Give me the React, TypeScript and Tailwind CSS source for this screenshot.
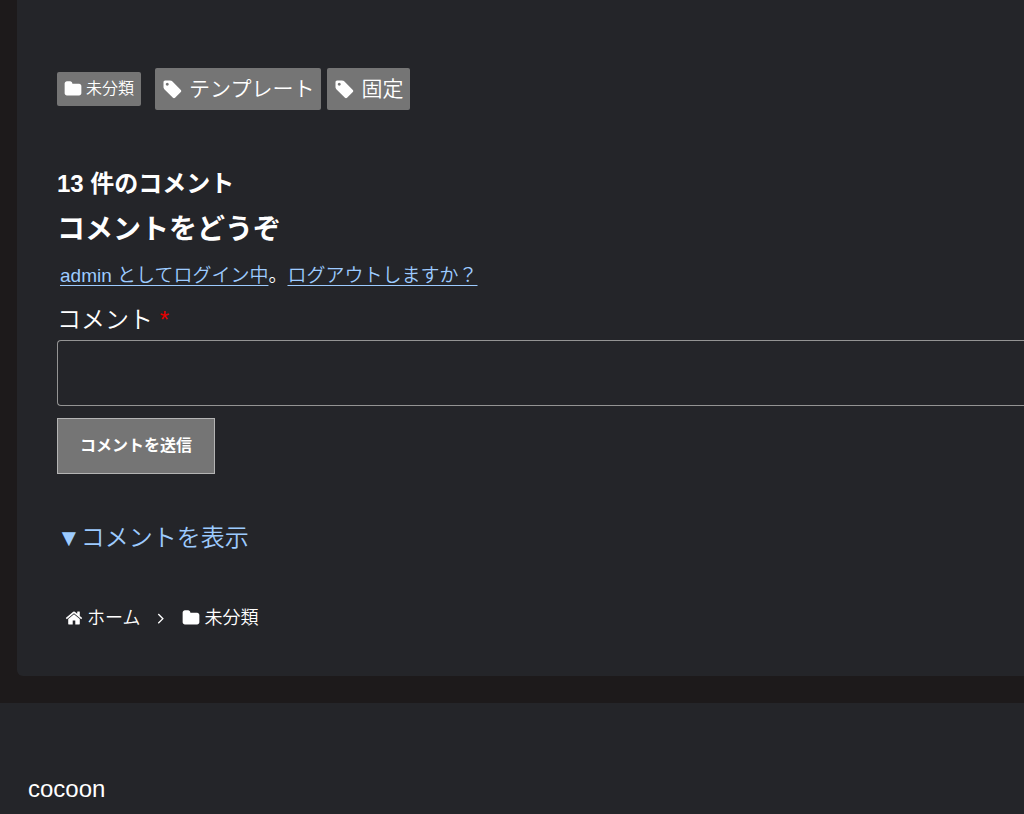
import React from "react";

type IconProps = {
  className?: string;
};

const FolderIcon: React.FC<IconProps> = ({ className }) => (
  <svg viewBox="0 0 1792 1792" fill="currentColor" className={className} aria-hidden="true">
    <path d="M1728 608v704q0 92-66 158t-158 66h-1216q-92 0-158-66t-66-158v-960q0-92 66-158t158-66h320q92 0 158 66t66 158v32h672q92 0 158 66t66 158z" />
  </svg>
);

const TagIcon: React.FC<IconProps> = ({ className }) => (
  <svg viewBox="0 0 1792 1792" fill="currentColor" className={className} aria-hidden="true">
    <path d="M576 448q0-53-37.5-90.5t-90.5-37.5-90.5 37.5-37.5 90.5 37.5 90.5 90.5 37.5 90.5-37.5 37.5-90.5zm1067 576q0 53-37 90l-491 492q-39 37-91 37-53 0-90-37l-715-716q-38-37-64.5-101t-26.5-117v-416q0-52 38-90t90-38h416q53 0 117 26.5t102 64.5l715 714q37 39 37 91z" />
  </svg>
);

const HomeIcon: React.FC<IconProps> = ({ className }) => (
  <svg viewBox="0 0 1792 1792" fill="currentColor" className={className} aria-hidden="true">
    <path d="M1472 992v480q0 26-19 45t-45 19h-384v-384h-256v384h-384q-26 0-45-19t-19-45v-480q0-1 .5-3t.5-3l575-474 575 474q1 2 1 6zm223-69l-62 74q-8 9-21 11h-3q-13 0-21-7l-692-577-692 577q-12 8-24 7-13-2-21-11l-62-74q-8-10-7-23.5t11-21.5l719-599q32-26 76-26t76 26l244 204v-195q0-14 9-23t23-9h192q14 0 23 9t9 23v408l219 182q10 8 11 21.5t-7 23.5z" />
  </svg>
);

const AngleRightIcon: React.FC<IconProps> = ({ className }) => (
  <svg viewBox="0 0 1792 1792" fill="currentColor" className={className} aria-hidden="true">
    <path d="M1171 960q0 13-10 23l-466 466q-10 10-23 10t-23-10l-50-50q-10-10-10-23t10-23l393-393-393-393q-10-10-10-23t10-23l50-50q10-10 23-10t23 10l466 466q10 10 10 23z" />
  </svg>
);

const tags = ["テンプレート", "固定"];

const PostTaxonomy = () => (
  <div className="flex items-center">
    <a
      href="#category"
      className="mr-3.5 flex h-[34px] items-center gap-1 rounded-xs bg-[#757575] px-[7px] text-base"
    >
      <FolderIcon className="size-[18px]" />
      未分類
    </a>
    <div className="flex gap-1.5">
      {tags.map((tag) => (
        <a
          key={tag}
          href="#tag"
          className="flex h-[42px] items-center gap-1.5 rounded-xs bg-[#757575] px-[7px] text-[21px]"
        >
          <TagIcon className="size-[21px]" />
          {tag}
        </a>
      ))}
    </div>
  </div>
);

const CommentForm = () => (
  <form onSubmit={(e) => e.preventDefault()}>
    <p className="px-[3px] text-[19px] leading-8">
      <a href="#profile" className="text-[#9dcbff] underline underline-offset-3">
        admin としてログイン中
      </a>
      。
      <a href="#logout" className="text-[#9dcbff] underline underline-offset-3">
        ログアウトしますか？
      </a>
    </p>
    <label htmlFor="comment" className="mt-2 block text-2xl leading-10">
      コメント <span className="text-[#e60000]">*</span>
    </label>
    <textarea
      id="comment"
      name="comment"
      required
      className="block h-[66px] w-full resize-none rounded-l border border-r-0 border-[#949494] bg-transparent p-3 text-lg outline-none"
    />
    <button
      type="submit"
      className="mt-3 block h-14 border border-[#b4b4b4] bg-[#757575] px-[22px] text-base font-bold"
    >
      コメントを送信
    </button>
  </form>
);

const Breadcrumb = () => (
  <nav className="flex items-center px-2 text-lg leading-7">
    <a href="#home" className="flex items-center gap-1">
      <HomeIcon className="size-[18px]" />
      ホーム
    </a>
    <AngleRightIcon className="mx-3 size-[18px]" />
    <a href="#category" className="flex items-center gap-1">
      <FolderIcon className="size-[18px]" />
      未分類
    </a>
  </nav>
);

const App = () => {
  return (
    <div className="min-h-screen bg-[#1d1a1b] font-['Liberation_Sans','Noto_Sans_CJK_JP',sans-serif] font-[350] text-white">
      <main className="ml-[17px] rounded-bl-md bg-[#242529] pt-[68px] pb-11 pl-10">
        <PostTaxonomy />
        <section className="mt-14">
          <h2 className="text-2xl leading-9 font-bold">13 件のコメント</h2>
          <h3 className="mt-2 mb-2.5 text-[28px] leading-10 font-bold">
            コメントをどうぞ
          </h3>
          <CommentForm />
        </section>
        <button type="button" className="mt-11 mb-[46px] block text-2xl leading-10 text-[#9dcbff]">
          ▼コメントを表示
        </button>
        <Breadcrumb />
      </main>
      <footer className="mt-[27px] min-h-28 bg-[#242529] px-7 pt-[68px] text-2xl leading-9">
        cocoon
      </footer>
    </div>
  );
};

export default App;
